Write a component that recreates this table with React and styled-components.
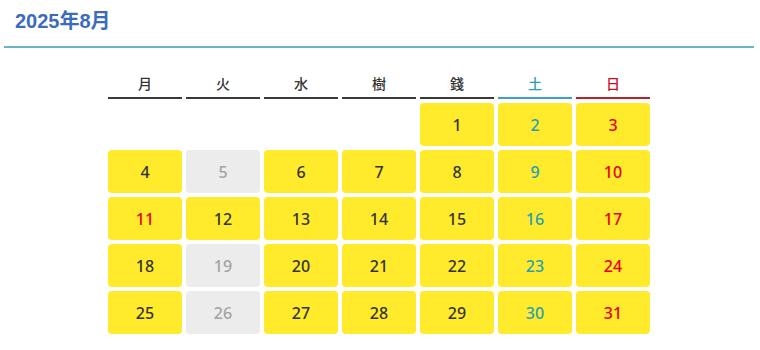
import React from "react";
import styled, { createGlobalStyle } from "styled-components";

const Global = createGlobalStyle`
  html, body { margin: 0; padding: 0; background: #fff; }
  body { font-family: "Noto Sans CJK JP", "Noto Sans", sans-serif; }
`;

const Page = styled.div`
  width: 750px;
  margin-left: 4px;
`;

const Title = styled.h2`
  margin: 0;
  padding: 9px 0 12px 11px;
  font-family: "Liberation Sans", "Noto Sans CJK JP", sans-serif;
  font-size: 20px;
  line-height: 25px;
  font-weight: 700;
  color: #3b6bbd;
  border-bottom: 2px solid #6bb3c6;
`;

const Calendar = styled.div`
  display: grid;
  grid-template-columns: repeat(7, 74px);
  justify-content: center;
  column-gap: 4px;
  row-gap: 4px;
  margin-top: 25px;
`;

const headColor = { weekday: "#333", sat: "#2f9dbb", sun: "#c8101e" };
const lineColor = { weekday: "#3a3a3a", sat: "#3aa3c0", sun: "#b8222e" };

const HeadCell = styled.div`
  text-align: center;
  font-size: 14px;
  font-weight: 500;
  line-height: 20px;
  padding-bottom: 4px;
  color: ${(p) => headColor[p.$kind]};
  border-bottom: 2px solid ${(p) => lineColor[p.$kind]};
`;

const dayColor = { weekday: "#333", sat: "#2a9fb3", sun: "#e60012", off: "#a3a3a3" };

const DayCell = styled.div`
  height: 43px;
  border-radius: 4px;
  display: flex;
  align-items: center;
  justify-content: center;
  font-family: "Noto Sans", "Noto Sans CJK JP", sans-serif;
  font-size: 16px;
  font-weight: 500;
  background: ${(p) => (p.$kind === "off" ? "#ececec" : "#ffeb2b")};
  color: ${(p) => dayColor[p.$kind]};
`;

const Blank = styled.div`
  height: 43px;
`;

const heads = [
  ["月", "weekday"],
  ["火", "weekday"],
  ["水", "weekday"],
  ["樹", "weekday"],
  ["錢", "weekday"],
  ["土", "sat"],
  ["日", "sun"],
];

const offDays = new Set([5, 19, 26]);

export default function App() {
  const cells = [];
  for (let i = 0; i < 4; i++) cells.push(<Blank key={"b" + i} />);
  for (let d = 1; d <= 31; d++) {
    const col = (d + 3) % 7;
    let kind = "weekday";
    if (offDays.has(d)) kind = "off";
    else if (col === 5) kind = "sat";
    else if (col === 6) kind = "sun";
    else if (d === 11) kind = "sun";
    cells.push(
      <DayCell key={d} $kind={kind}>
        {d}
      </DayCell>
    );
  }
  return (
    <>
      <Global />
      <Page>
        <Title>2025年8月</Title>
        <Calendar>
          {heads.map(([t, k]) => (
            <HeadCell key={t} $kind={k}>
              {t}
            </HeadCell>
          ))}
          {cells}
        </Calendar>
      </Page>
    </>
  );
}
